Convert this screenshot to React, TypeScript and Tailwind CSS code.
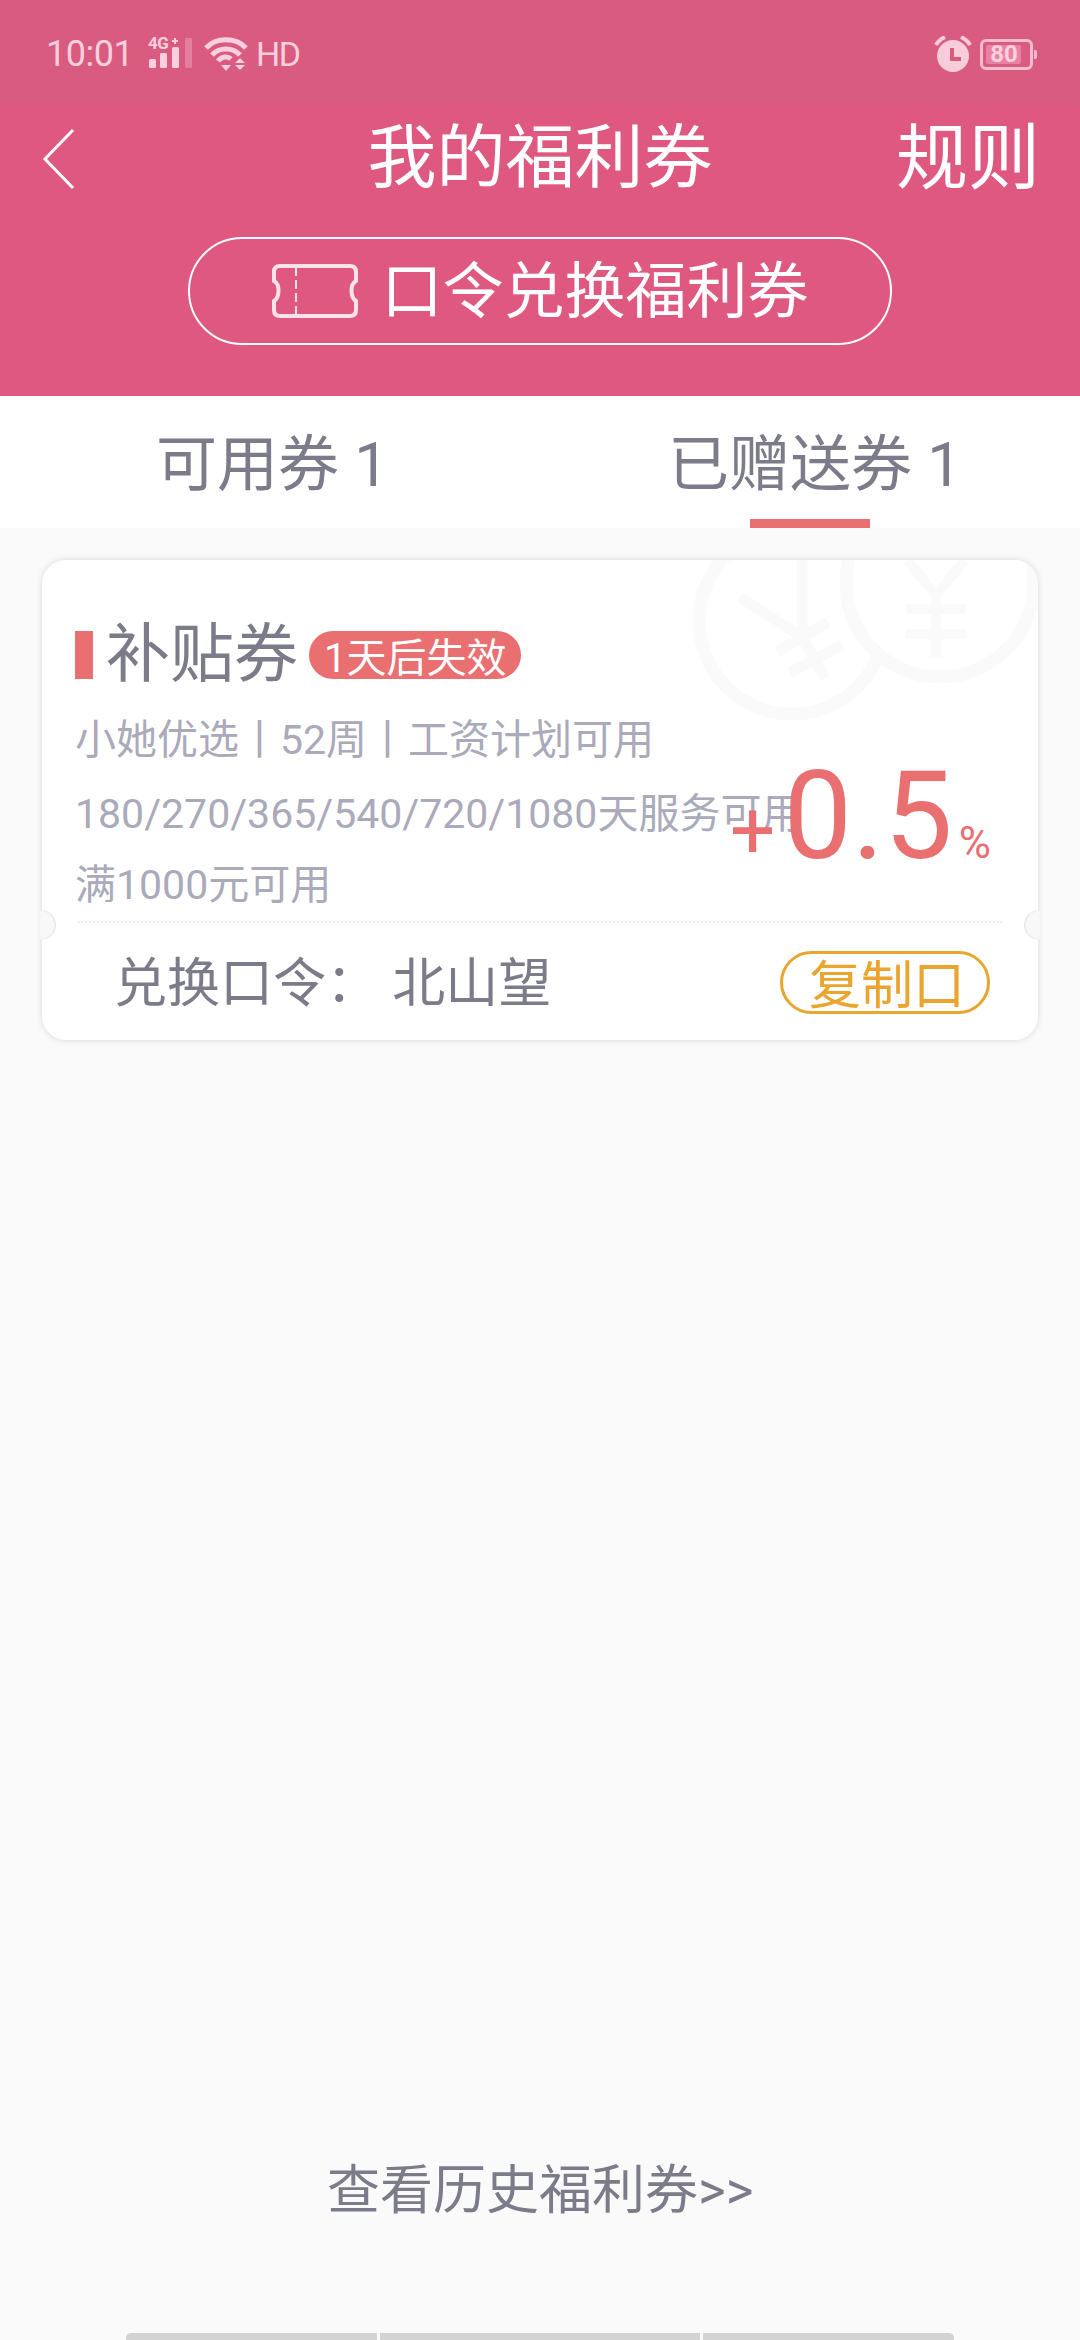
export default function App() {
  const gray = "text-[#7b7b89]"

  return (
    <div className="flex h-[2340px] w-[1080px] flex-col overflow-hidden bg-[#fafafa] font-['Roboto','Noto_Sans_CJK_SC',sans-serif]">
      {/* header */}
      <header className="h-[396px] shrink-0 bg-[#de5880] text-white">
        <div className="flex h-[106px] items-center justify-between bg-[#d95b80] pl-[46px] pr-[47px] pt-[2px] text-[#fbd0de]">
          <div className="flex items-center">
            <span className="w-[103px] text-[36px] leading-none tracking-[-0.5px]">10:01</span>
            <div className="relative h-[32px] w-[44px]">
              <span className="absolute left-[-1px] top-[-3px] text-[17px] font-bold leading-none tracking-[-0.5px]">4G</span>
              <svg width="44" height="32" viewBox="0 0 44 32" className="absolute left-0 top-0" fill="currentColor">
                <rect x="0" y="21" width="7" height="9" rx="1.5" />
                <rect x="11" y="15" width="7" height="15" rx="1.5" />
                <rect x="23" y="9" width="7" height="21" rx="1.5" />
                <path d="M25 0h2v2h2v2h-2v2h-2V4h-2V2h2z" />
                <rect x="36" y="0" width="7" height="30" rx="1.5" opacity="0.3" />
              </svg>
            </div>
            <svg width="44" height="34" viewBox="0 0 44 34" className="ml-[11px]" fill="none" stroke="currentColor" strokeWidth="5">
              <path d="M2 11C12 0 32 0 42 11" />
              <path d="M8 18C15 10 29 10 36 18" />
              <path d="M14 24C18 19 24 19 27 22" />
              <path d="M17 28h10l-5 6z" fill="currentColor" stroke="none" />
              <path d="M31 26h10l-5-5zM31 28h10l-5 5z" fill="currentColor" stroke="none" />
            </svg>
            <span className="ml-[8px] text-[34px] leading-none tracking-[-1.5px]">HD</span>
          </div>
          <div className="flex items-center">
            <svg width="38" height="36" viewBox="0 0 38 36" fill="#f8ccdb">
              <circle cx="19" cy="20" r="16" />
              <path d="M2 9C4 5 7 3 11 1" fill="none" stroke="#f8ccdb" strokeWidth="4" />
              <path d="M36 9C34 5 31 3 27 1" fill="none" stroke="#f8ccdb" strokeWidth="4" />
              <path d="M16 12h4v9h7v4H16z" fill="#d95b80" />
            </svg>
            <div className="relative ml-[8px] flex h-[31px] w-[53px] items-center justify-center rounded-[6px] border-[3px] border-[#f8bcd0]">
              <div className="absolute bottom-[3px] left-[3px] top-[3px] w-[35px] rounded-[2px] bg-[#e981a2]" />
              <span className="relative mr-[5px] text-[24px] font-bold leading-none">80</span>
              <div className="absolute right-[-7px] top-[8px] h-[9px] w-[3px] rounded-r-[2px] bg-[#f8bcd0]" />
            </div>
          </div>
        </div>

        <div className="flex h-[101px] items-center justify-between pl-[42px] pr-[40px] pt-[4px]">
          <svg width="34" height="62" viewBox="0 0 34 62" fill="none" stroke="#fff" strokeWidth="3">
            <path d="M31 2 3 31 31 60" />
          </svg>
          <h1 className="pl-[108px] text-[69px] leading-none">我的福利券</h1>
          <span className="text-[72px] leading-none">规则</span>
        </div>

        <div className="flex justify-center pt-[30px]">
          <div className="flex h-[108px] w-[704px] items-center justify-center gap-[22px] rounded-full border-2 border-white">
            <svg width="88" height="54" viewBox="0 0 88 54" fill="none" stroke="#fce3ea" strokeWidth="4">
              <path d="M9 2h70c4 0 6 2 6 6v9c-6 3-6 16 0 20v9c0 4-2 6-6 6H9c-4 0-6-2-6-6v-9c6-4 6-17 0-20V8c0-4 2-6 6-6z" />
              <path d="M25 3v48" strokeWidth="2" strokeDasharray="9 4" />
            </svg>
            <span className="pt-[2px] text-[61px] leading-none">口令兑换福利券</span>
          </div>
        </div>
      </header>

      {/* tabs */}
      <nav className={`flex h-[132px] shrink-0 bg-white pt-[8px] text-[61px] ${gray}`}>
        <div className="flex w-[540px] items-center pl-[156px]">可用券 1</div>
        <div className="relative flex w-[540px] items-center pl-[128px]">
          已赠送券 1
          <div className="absolute bottom-0 left-[210px] h-[9px] w-[120px] bg-[#ea6f70]" />
        </div>
      </nav>

      {/* coupon card */}
      <section className="flex-1 px-[42px] pt-[32px]">
        <div className="relative h-[480px] rounded-[24px] bg-white shadow-[0_0_7px_rgba(0,0,0,0.14)]">
          <div className="absolute inset-0 overflow-hidden rounded-[24px]">
            <svg width="996" height="480" viewBox="42 560 996 480" className="absolute left-0 top-0" fill="none" stroke="#fafafa" strokeWidth="13">
              <circle cx="792" cy="621" r="93" />
              <path strokeWidth="11" d="M802 560v77l-62-40M802 637l23 41M777 652l51-30M790 673l52-28" />
              <circle cx="940" cy="583" r="94" fill="#fff" />
              <path strokeWidth="10" d="M907 560l29 35 29-35M936 595v62M906 609h60M906 634h60" />
            </svg>
          </div>

          <div className="relative flex h-[361px] flex-col pl-[33px] pt-[63px]">
            <div className="flex h-[64px] items-center">
              <div className="h-[48px] w-[18px] bg-[#ea6f70]" />
              <span className={`ml-[13px] text-[64px] leading-none ${gray}`}>补贴券</span>
              <span className="ml-[11px] h-[48px] overflow-hidden rounded-full bg-[#ea6f70] px-[15px] text-[40px] leading-[56px] text-white">1天后失效</span>
            </div>
            <div className="mt-[32px] flex flex-col gap-[32px] text-[41px] leading-[42px] text-[#aaaaba]">
              <p>小她优选丨52周丨工资计划可用</p>
              <p>180/270/365/540/720/1080天服务可用</p>
              <p className="mt-[-3px]">满1000元可用</p>
            </div>
            <div className="absolute right-[47px] top-[207px] flex items-baseline text-[#ea6f70]">
              <span className="mr-[8px] text-[80px] leading-[100px]">+</span>
              <span className="text-[122px] leading-[100px]">0.5</span>
              <span className="ml-[6px] text-[44px] leading-none">%</span>
            </div>
          </div>

          <div className="mx-[36px] border-t-2 border-dotted border-[#eeeeee]" />

          <div className="flex h-[117px] items-center justify-between pl-[72px] pr-[48px] pt-[2px]">
            <span className={`pt-[4px] text-[53px] leading-none ${gray}`}>兑换口令： 北山望</span>
            <span className="h-[63px] w-[210px] overflow-hidden rounded-full border-[3px] border-[#eaa52f] pl-[26px] text-[52px] leading-[66px] text-[#eaa52f]">复制口</span>
          </div>

          <div className="absolute left-[-2px] top-[350px] h-[30px] w-[16px] rounded-r-full bg-[#f8f8f8] shadow-[inset_-1px_0_2px_rgba(0,0,0,0.1)]" />
          <div className="absolute right-[-2px] top-[350px] h-[30px] w-[16px] rounded-l-full bg-[#f8f8f8] shadow-[inset_1px_0_2px_rgba(0,0,0,0.1)]" />
        </div>
      </section>

      {/* footer */}
      <p className={`shrink-0 pl-[327px] text-[53px] leading-none ${gray}`}>查看历史福利券&gt;&gt;</p>
      <div className="mt-[115px] flex h-[7px] shrink-0 gap-[3px] pl-[126px]">
        <div className="w-[251px] rounded-tl-[5px] bg-[#d3d3d3]" />
        <div className="w-[320px] bg-[#d3d3d3]" />
        <div className="w-[251px] rounded-tr-[5px] bg-[#d3d3d3]" />
      </div>
    </div>
  )
}
